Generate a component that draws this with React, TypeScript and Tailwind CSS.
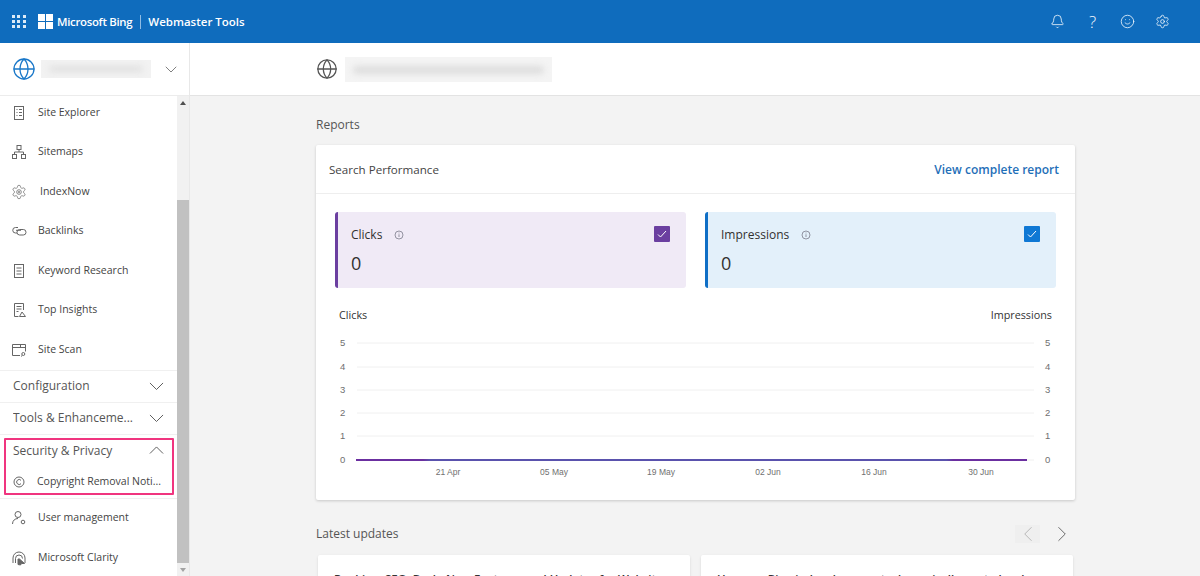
import { Bell, ChevronLeft, ChevronRight, Globe, Settings, Smile } from "lucide-react";
import type { ReactNode } from "react";

const uiFont = "font-['Open_Sans','Noto_Sans',sans-serif]";

function Ico({ children }: { children: ReactNode }) {
  return (
    <svg width="16" height="16" viewBox="0 0 16 16" fill="none" stroke="#666" strokeWidth="1">
      {children}
    </svg>
  );
}

function Caret({ up, width = 15 }: { up?: boolean; width?: number }) {
  return (
    <svg width={width} height={(width * 9) / 16} viewBox="0 0 16 9" fill="none" stroke="#555" strokeWidth="1">
      <path d={up ? "M1 8l7-7 7 7" : "M1 1l7 7 7-7"} />
    </svg>
  );
}

const icons: Record<string, ReactNode> = {
  explorer: (
    <Ico>
      <rect x="3.500" y="1.500" width="9" height="13" />
      <path d="M5.500 4.500h1M8 4.500h3M5.500 7.500h1M8 7.500h3M5.500 10.500h1M8 10.500h3" />
    </Ico>
  ),
  sitemaps: (
    <Ico>
      <rect x="6" y="1.500" width="4" height="4" />
      <rect x="1.500" y="10.500" width="4" height="4" />
      <rect x="10.500" y="10.500" width="4" height="4" />
      <path d="M8 5.500V8M3.500 10.500V8h9v2.500" />
    </Ico>
  ),
  indexnow: (
    <svg width="18" height="18" viewBox="0 0 24 24" fill="none" stroke="#666" strokeWidth="1.100">
      <path d="M12.220 2h-.44a2 2 0 0 0-2 2v.18a2 2 0 0 1-1 1.730l-.43.250a2 2 0 0 1-2 0l-.150-.080a2 2 0 0 0-2.730.730l-.220.380a2 2 0 0 0 .730 2.730l.150.100a2 2 0 0 1 1 1.720v.510a2 2 0 0 1-1 1.740l-.150.090a2 2 0 0 0-.730 2.730l.220.380a2 2 0 0 0 2.730.730l.150-.080a2 2 0 0 1 2 0l.430.250a2 2 0 0 1 1 1.730V20a2 2 0 0 0 2 2h.440a2 2 0 0 0 2-2v-.180a2 2 0 0 1 1-1.730l.430-.250a2 2 0 0 1 2 0l.150.080a2 2 0 0 0 2.730-.730l.220-.390a2 2 0 0 0-.730-2.730l-.150-.080a2 2 0 0 1-1-1.740v-.500a2 2 0 0 1 1-1.740l.150-.090a2 2 0 0 0 .730-2.730l-.220-.380a2 2 0 0 0-2.730-.730l-.150.080a2 2 0 0 1-2 0l-.430-.250a2 2 0 0 1-1-1.730V4a2 2 0 0 0-2-2z" />
      <circle cx="12" cy="12" r="3.500" />
      <circle cx="12" cy="12" r="1.200" />
    </svg>
  ),
  backlinks: (
    <Ico>
      <path d="M7 4.500H4.500a2.700 2.700 0 0 0 0 5.500H6" />
      <rect x="6" y="6.500" width="9" height="5.500" rx="2.700" />
      <path d="M5 7.300h5" />
    </Ico>
  ),
  keyword: (
    <Ico>
      <rect x="3.500" y="1.500" width="9" height="13" />
      <path d="M5.500 5h5M5.500 8h5M5.500 11h5" />
    </Ico>
  ),
  insights: (
    <Ico>
      <path d="M7.500 14.500h-4v-13h9V8" />
      <path d="M5.500 4.500h5M5.500 7h5M5.500 9.500h2" />
      <path d="M8.500 14.500l2.500-4.500 3.500 4.500z" />
    </Ico>
  ),
  scan: (
    <Ico>
      <path d="M9 13.500H1.500v-11h13v7" />
      <path d="M1.500 5.500h13M9.500 2.500v3" />
      <circle cx="12.300" cy="12" r="1.500" />
      <path d="M11.300 13.300l-1.300 1.200" />
    </Ico>
  ),
  copyright: (
    <Ico>
      <circle cx="8" cy="8" r="5" />
      <path d="M10 6.300a2.500 2.500 0 1 0 0 3.400" />
    </Ico>
  ),
  users: (
    <Ico>
      <circle cx="7" cy="4.500" r="3" />
      <path d="M1.500 14c0-3.500 2.500-5.500 5.500-5.500" />
      <circle cx="12" cy="12" r="1.800" />
    </Ico>
  ),
  clarity: (
    <Ico>
      <path d="M2 13V8a6 6 0 0 1 12 0v5" />
      <path d="M4.500 13V8.500a3.500 3.500 0 0 1 7 0" />
      <path d="M7 14.500V9h1.500l5 4.500h-3l-1 1.500z" fill="#666" />
    </Ico>
  ),
};

function NavItem({ icon, label, indent }: { icon: string; label: string; indent?: boolean }) {
  return (
    <div className="flex h-[39.5px] items-center pl-[11px]">
      <span className="flex w-[16px] justify-center">{icons[icon]}</span>
      <span className={`text-[10.5px] text-[#444] ${indent ? "ml-[13px]" : "ml-[11px]"}`}>{label}</span>
    </div>
  );
}

function Section({ label, open }: { label: string; open?: boolean }) {
  return (
    <div className="flex h-[32px] items-center justify-between border-t border-[#f0f0f0] pl-[13px] pr-[13px]">
      <span className="truncate text-[12px] text-[#555]">{label}</span>
      <Caret up={open} />
    </div>
  );
}

function Sidebar() {
  return (
    <aside className="flex w-[190px] shrink-0 flex-col border-r border-[#e8e8e8] bg-white">
      <div className="flex h-[53px] shrink-0 items-center border-b border-[#ececec] pl-[12px] pr-[12px]">
        <Globe size={24} strokeWidth={1.3} color="#1a78c9" />
        <div className="ml-[5px] h-[18px] w-[110px] overflow-hidden bg-[#f2f2f2]">
          <div className="mx-[8px] mt-[6px] h-[6px] rounded bg-[#e0e0e0] blur-[3px]" />
        </div>
        <span className="ml-auto">
          <Caret width={12} />
        </span>
      </div>
      <div className="flex min-h-0 flex-1 overflow-hidden">
        <div className="-mt-[3px] min-w-0 flex-1">
          <NavItem icon="explorer" label="Site Explorer" />
          <NavItem icon="sitemaps" label="Sitemaps" />
          <NavItem icon="indexnow" label="IndexNow" indent />
          <NavItem icon="backlinks" label="Backlinks" />
          <NavItem icon="keyword" label="Keyword Research" />
          <NavItem icon="insights" label="Top Insights" />
          <NavItem icon="scan" label="Site Scan" />
          <Section label="Configuration" />
          <Section label="Tools & Enhanceme..." />
          <div className="relative border-t border-[#f0f0f0]">
            <div className="absolute left-[4px] right-[3px] top-[3px] h-[57px] rounded-[1px] border-[2.500px] border-[#f0357f]" />
            <div className="flex h-[32px] items-center justify-between pl-[13px] pr-[13px]">
              <span className="text-[12px] text-[#555]">Security &amp; Privacy</span>
              <Caret up />
            </div>
            <div className="flex h-[31px] items-center pl-[11px]">
              <span className="flex w-[16px] justify-center">{icons.copyright}</span>
              <span className="ml-[10px] truncate pr-[6px] text-[10.5px] text-[#444]">Copyright Removal Noti...</span>
            </div>
          </div>
          <div className="border-t border-[#f0f0f0]">
            <NavItem icon="users" label="User management" />
            <NavItem icon="clarity" label="Microsoft Clarity" />
          </div>
        </div>
        <div className="flex w-[12px] shrink-0 flex-col items-center bg-[#f1f1f1]">
          <div className="flex h-[14px] items-center">
            <div className="h-0 w-0 border-x-[3px] border-b-[4px] border-x-transparent border-b-[#505050]" />
          </div>
          <div className="mt-[90px] h-[363px] w-full bg-[#c1c1c1]" />
          <div className="flex h-[13px] items-center">
            <div className="h-0 w-0 border-x-[3px] border-t-[4px] border-x-transparent border-t-[#a3a3a3]" />
          </div>
        </div>
      </div>
    </aside>
  );
}

function MetricCard({
  label,
  bg,
  accent,
  check,
}: {
  label: string;
  bg: string;
  accent: string;
  check: string;
}) {
  return (
    <div className={`flex h-[76px] flex-1 justify-between rounded-[3px] border-l-[3px] pl-[13px] pr-[16px] pt-[13px] ${bg} ${accent}`}>
      <div>
        <div className="flex items-center text-[12px] leading-[20px] text-[#323130]">
          {label}
          <svg width="10" height="10" viewBox="0 0 10 10" fill="none" stroke="#7c7c8c" strokeWidth="0.8" className="ml-[12px]">
            <circle cx="5" cy="5" r="4" />
            <path d="M5 4.300v2.700M5 2.600v.8" />
          </svg>
        </div>
        <div className="mt-[6px] text-[18px] leading-[24px] text-[#323130]">0</div>
      </div>
      <div className={`mt-[1px] flex h-[16px] w-[16px] items-center justify-center rounded-[1px] ${check}`}>
        <svg width="10" height="10" viewBox="0 0 10 10" fill="none" stroke="white" strokeWidth="1">
          <path d="M1 5.500l2.500 2.500L9 2" />
        </svg>
      </div>
    </div>
  );
}

function Chart() {
  const ys = [
    { v: 5, y: 20 },
    { v: 4, y: 44 },
    { v: 3, y: 67 },
    { v: 2, y: 90 },
    { v: 1, y: 113 },
    { v: 0, y: 137 },
  ];
  const xs = [
    { t: "21 Apr", x: 132 },
    { t: "05 May", x: 238 },
    { t: "19 May", x: 345 },
    { t: "02 Jun", x: 452 },
    { t: "16 Jun", x: 558 },
    { t: "30 Jun", x: 665 },
  ];
  return (
    <svg width="759" height="162" viewBox="0 0 759 162" fontFamily="'Liberation Sans', sans-serif" fontSize="9.500" fill="#707070">
      <defs>
        <linearGradient id="line" gradientUnits="userSpaceOnUse" x1="40" x2="711" y1="0" y2="0">
          <stop offset="0" stopColor="#6b2fa0" />
          <stop offset="0.1" stopColor="#6b2fa0" />
          <stop offset="0.11" stopColor="#5a52ad" />
          <stop offset="0.88" stopColor="#5a52ad" />
          <stop offset="0.89" stopColor="#6b2fa0" />
          <stop offset="1" stopColor="#6b2fa0" />
        </linearGradient>
      </defs>
      {ys.map((r) => (
        <g key={r.v}>
          <line x1="41" x2="718" y1={r.y} y2={r.y} stroke="#f0f0f0" />
          <text x="24" y={r.y + 3}>{r.v}</text>
          <text x="729" y={r.y + 3}>{r.v}</text>
        </g>
      ))}
      <rect x="40" y="136" width="671" height="2" fill="url(#line)" />
      {xs.map((l) => (
        <text key={l.t} x={l.x} y="152" textAnchor="middle" fontSize="8.500">
          {l.t}
        </text>
      ))}
    </svg>
  );
}

export default function App() {
  return (
    <div className={`flex h-[576px] w-[1200px] flex-col overflow-hidden bg-[#f3f3f3] ${uiFont}`}>
      <header className="flex h-[43px] shrink-0 items-center bg-[#0f6cbd] text-white">
        <div className="ml-[12px] grid w-[14px] grid-cols-3 gap-[2px]">
          {Array.from({ length: 9 }).map((_, i) => (
            <span key={i} className="h-[3px] w-[3px] bg-[#dcebf8]" />
          ))}
        </div>
        <div className="ml-[12px] grid h-[15px] w-[15px] grid-cols-2 gap-[1px]">
          <span className="bg-white" />
          <span className="bg-white" />
          <span className="bg-white" />
          <span className="bg-white" />
        </div>
        <span className="ml-[4px] text-[11.400px] font-semibold tracking-[-0.3px]">Microsoft Bing</span>
        <span className="ml-[8px] h-[14px] w-px bg-[#8fbce3]" />
        <span className="ml-[7px] text-[11.500px] font-semibold">Webmaster Tools</span>
        <div className="ml-auto mr-[30px] flex items-center gap-[20px]">
          <Bell size={15} strokeWidth={1.3} color="#f2f8fd" />
          <span className="w-[15px] text-center text-[17px] font-light leading-none text-[#f2f8fd]">?</span>
          <Smile size={15} strokeWidth={1.3} color="#f2f8fd" />
          <Settings size={15} strokeWidth={1.3} color="#f2f8fd" />
        </div>
      </header>
      <div className="flex min-h-0 flex-1">
        <Sidebar />
        <main className="min-w-0 flex-1 overflow-hidden">
          <div className="flex h-[53px] items-center border-b border-[#e3e3e3] bg-white pl-[126px]">
            <Globe size={22} strokeWidth={1.4} color="#555" />
            <div className="ml-[7px] h-[25px] w-[207px] overflow-hidden bg-[#f4f4f4]">
              <div className="mx-[8px] mt-[9px] h-[8px] rounded bg-[#dddddd] blur-[3px]" />
            </div>
          </div>
          <div className="pl-[126px] pr-[125px]">
            <div className="flex h-[49px] items-center pt-[8px] text-[12px] text-[#555]">Reports</div>
            <section className="h-[355px] rounded-[2px] bg-white shadow-[0_1px_3px_rgba(0,0,0,0.18)]">
              <div className="flex h-[49px] items-center justify-between border-b border-[#eeeeee] pl-[13px] pr-[16px] pt-[2px]">
                <span className="text-[11.600px] text-[#444]">Search Performance</span>
                <span className="text-[12px] font-semibold text-[#1f6fb8]">View complete report</span>
              </div>
              <div className="flex gap-[19px] pl-[19px] pr-[19px] pt-[18px]">
                <MetricCard label="Clicks" bg="bg-[#f0eaf6]" accent="border-[#6b3fa0]" check="bg-[#6b3fa0]" />
                <MetricCard label="Impressions" bg="bg-[#e3f0fa]" accent="border-[#0f6fc6]" check="bg-[#0f78d4]" />
              </div>
              <div className="flex justify-between pl-[23px] pr-[23px] pt-[19px] text-[10.800px] leading-[16px] text-[#333]">
                <span>Clicks</span>
                <span>Impressions</span>
              </div>
              <Chart />
            </section>
            <div className="flex h-[55px] items-center justify-between pt-[12px]">
              <span className="text-[12px] text-[#555]">Latest updates</span>
              <div className="mr-[5px] flex items-center">
                <span className="flex h-[18px] w-[25px] items-center justify-center bg-[#efefef]">
                  <ChevronLeft size={26} strokeWidth={0.9} color="#b5b5b5" className="shrink-0" />
                </span>
                <span className="ml-[14px] flex w-[16px] justify-center">
                  <ChevronRight size={26} strokeWidth={0.9} color="#666" className="shrink-0" />
                </span>
              </div>
            </div>
            <div className="flex gap-[11px] pl-[2px] pr-[2px]">
              <div className="h-[60px] flex-1 overflow-hidden rounded-[2px] bg-white px-[16px] pt-[15px] text-[11.500px] font-semibold text-[#333] shadow-sm">
                <div className="truncate">Ranking, SEO, Bash, New Features and Updates for Website</div>
              </div>
              <div className="h-[60px] flex-1 overflow-hidden rounded-[2px] bg-white px-[16px] pt-[15px] text-[11.500px] font-semibold text-[#333] shadow-sm">
                <div className="truncate">How can Bing index documents dynamically, up to level</div>
              </div>
            </div>
          </div>
        </main>
      </div>
    </div>
  );
}
